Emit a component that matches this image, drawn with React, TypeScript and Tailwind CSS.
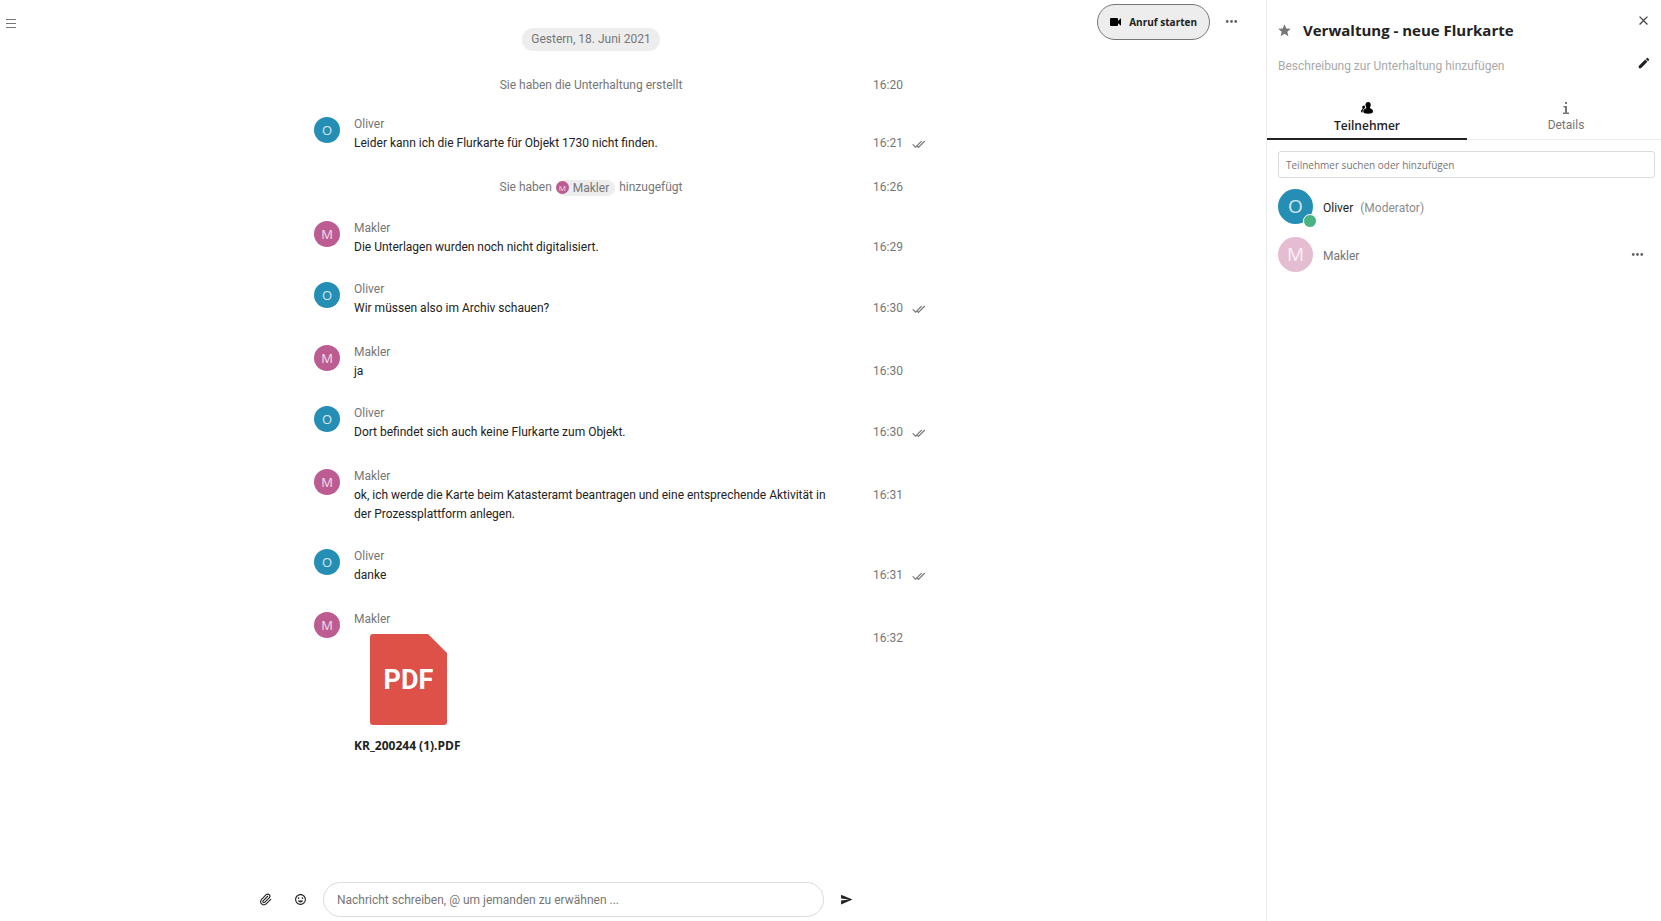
import type { ReactNode } from 'react'
import clsx from 'clsx'
import { Paperclip } from 'lucide-react'
import { MdClose, MdEdit, MdInsertEmoticon, MdMoreHoriz, MdSend, MdStar } from 'react-icons/md'

type User = 'Oliver' | 'Makler'

type ChatMessage = {
  author: User
  text?: string
  file?: string
  time: string
  read?: boolean
}

const AVATAR_COLORS: Record<User, string> = {
  Oliver: 'bg-[#248eb5]',
  Makler: 'bg-[#bc5c91]',
}

const MESSAGES: ChatMessage[] = [
  { author: 'Makler', text: 'Die Unterlagen wurden noch nicht digitalisiert.', time: '16:29' },
  { author: 'Oliver', text: 'Wir müssen also im Archiv schauen?', time: '16:30', read: true },
  { author: 'Makler', text: 'ja', time: '16:30' },
  { author: 'Oliver', text: 'Dort befindet sich auch keine Flurkarte zum Objekt.', time: '16:30', read: true },
  {
    author: 'Makler',
    text: 'ok, ich werde die Karte beim Katasteramt beantragen und eine entsprechende Aktivität in der Prozessplattform anlegen.',
    time: '16:31',
  },
  { author: 'Oliver', text: 'danke', time: '16:31', read: true },
  { author: 'Makler', file: 'KR_200244 (1).PDF', time: '16:32' },
]

function Avatar({ user, className }: { user: User; className?: string }) {
  return (
    <span
      className={clsx(
        "flex shrink-0 items-center justify-center rounded-full font-['Open_Sans',sans-serif] text-white/80",
        AVATAR_COLORS[user],
        className,
      )}
    >
      {user[0]}
    </span>
  )
}

function DoubleCheck() {
  return (
    <svg viewBox="0 0 14 9" className="h-[9px] w-[14px]" fill="none" stroke="#767676" strokeWidth="1.2" role="img" aria-label="Gelesen">
      <path d="M0.7 4.4 3.6 7.2 9.6 1.2M4.6 5.6 6.4 7.4 12.8 1" />
    </svg>
  )
}

function PdfIcon() {
  return (
    <svg viewBox="0 0 77 91" className="h-[91px] w-[77px]" role="img" aria-label="PDF">
      <path d="M3 0H58L77 19V88a3 3 0 0 1-3 3H3a3 3 0 0 1-3-3V3a3 3 0 0 1 3-3Z" fill="#dd5148" />
      <text x="38.5" y="55" textAnchor="middle" fill="#fff" fontFamily="Roboto" fontWeight="700" fontSize="27">
        PDF
      </text>
    </svg>
  )
}

function SystemMessage({ time, children }: { time: string; children: ReactNode }) {
  return (
    <li className="flex pb-5 text-[#767676]">
      <div className="ml-[121px] w-[474px] text-center">{children}</div>
      <time className="ml-[45px]">{time}</time>
    </li>
  )
}

function Message({ author, text, file, time, read }: ChatMessage) {
  return (
    <li className={clsx('flex', read ? 'pb-[25px]' : 'pb-[23px]')}>
      <Avatar user={author} className="mt-[2px] ml-[81px] size-[26px] text-[13px]" />
      <div className="ml-[14px] w-[474px]">
        <div className="text-[#767676]">{author}</div>
        {text && <p className="text-[#222]">{text}</p>}
        {file && (
          <a href="#datei" className="block font-['Open_Sans',sans-serif] font-bold text-[#222]">
            <span className="block px-4 pt-[5px] pb-[11px]">
              <PdfIcon />
            </span>
            {file}
          </a>
        )}
      </div>
      <time className="mt-[19px] ml-[45px] w-[39px] text-[#767676]">{time}</time>
      {read && (
        <span className="mt-[25px]">
          <DoubleCheck />
        </span>
      )}
    </li>
  )
}

function Chat() {
  return (
    <section className="flex min-h-screen min-w-0 flex-col">
      <div className="ml-[121px] flex w-[474px] justify-center pt-7">
        <span className="rounded-full bg-[#ededed] px-[9px] leading-[23px] text-[#767676]">Gestern, 18. Juni 2021</span>
      </div>
      <ul className="mt-[25px] grow">
        <SystemMessage time="16:20">Sie haben die Unterhaltung erstellt</SystemMessage>
        <Message author="Oliver" text="Leider kann ich die Flurkarte für Objekt 1730 nicht finden." time="16:21" read />
        <SystemMessage time="16:26">
          <span className="mb-[2px] flex items-center justify-center gap-1">
            Sie haben
            <span className="flex items-center gap-1 rounded-full bg-[#ededed] pr-[6px] leading-4">
              <Avatar user="Makler" className="size-[13px] text-[8px]" />
              Makler
            </span>
            hinzugefügt
          </span>
        </SystemMessage>
        {MESSAGES.map((message, i) => (
          <Message key={i} {...message} />
        ))}
      </ul>
      <form className="mb-1 ml-[14px] flex w-[617px] items-center text-[#222]">
        <button type="button" aria-label="Datei anhängen" className="flex size-9 items-center justify-center">
          <Paperclip size={13} />
        </button>
        <button type="button" aria-label="Emoji einfügen" className="flex h-9 w-[34px] items-center justify-center">
          <MdInsertEmoticon size={13} />
        </button>
        <input
          type="text"
          aria-label="Nachricht"
          placeholder="Nachricht schreiben, @ um jemanden zu erwähnen ..."
          className="mr-1 ml-[6px] h-[35px] min-w-0 grow rounded-full border border-[#dbdbdb] px-[13px] pt-px outline-none placeholder:text-[#767676]"
        />
        <button type="submit" aria-label="Senden" className="flex size-9 items-center justify-center">
          <MdSend size={13} />
        </button>
      </form>
    </section>
  )
}

function Sidebar() {
  return (
    <aside className="w-[395px] shrink-0 border-l border-[#ededed]">
      <header className="pl-[10px]">
        <div className="flex h-[52px] pr-[10px]">
          <MdStar size={15} className="mt-[23px] text-[#767676]" />
          <h1 className="mt-[18px] ml-[11px] grow font-['Open_Sans',sans-serif] text-[15px] leading-6 font-bold text-[#222]">
            Verwaltung - neue Flurkarte
          </h1>
          <button type="button" aria-label="Schließen" className="mt-3 h-4 text-[#444]">
            <MdClose size={15} />
          </button>
        </div>
        <div className="flex items-start justify-between pt-1 pr-[10px] text-[#a9a9a9]">
          <span className="ml-px leading-5">Beschreibung zur Unterhaltung hinzufügen</span>
          <button type="button" aria-label="Beschreibung bearbeiten" className="text-[#222]">
            <MdEdit size={14} />
          </button>
        </div>
      </header>

      <div role="tablist" className="mt-6 flex">
        <button
          type="button"
          role="tab"
          aria-selected="true"
          className="flex w-[200px] flex-col items-center border-b-2 border-[#222] pb-[3px] font-['Open_Sans',sans-serif] font-semibold text-[#222]"
        >
          <svg viewBox="0 0 16 16" className="my-[2px] size-3" fill="#000" aria-hidden="true">
            <path d="M9.5 0C7.3 0 6 1.6 6 3.8c0 1.400.600 2.600 1 3.200.200.800 0 1.200-.800 1.600C4.500 9.400 3 10.500 3 12.200 3 14.600 5.500 15.500 9.500 15.500s6.500-.900 6.500-3.300c0-1.700-1.500-2.800-3.200-3.600-.800-.400-1-.800-.800-1.600.400-.600 1-1.800 1-3.200C13 1.600 11.700 0 9.500 0Z" />
            <path d="M4 4.500C2.500 4.500 1.600 5.600 1.600 7c0 1 .400 1.800.700 2.200C1 10 0 11 0 12.200c0 1 .700 1.600 2 1.800C2 11 3 9.300 5.400 8 5.100 7 5 5.500 5.200 4.900Z" />
          </svg>
          Teilnehmer
        </button>
        <button
          type="button"
          role="tab"
          aria-selected="false"
          className="flex grow flex-col items-center border-b border-[#ededed] pb-1 pl-1 text-[#767676]"
        >
          <svg viewBox="0 0 12 12" className="my-[2px] size-3" fill="currentColor" aria-hidden="true">
            <path d="M5 0h2v2H5zM3.500 4H7v6.500h2V12H3v-1.500h2V5.500H3.500z" />
          </svg>
          Details
        </button>
      </div>

      <div className="pt-[11px] pr-[6px] pl-[11px]">
        <input
          type="search"
          aria-label="Teilnehmer suchen oder hinzufügen"
          placeholder="Teilnehmer suchen oder hinzufügen"
          className="block h-[27px] w-full rounded-[3px] border border-[#dbdbdb] px-[7px] font-['Open_Sans',sans-serif] text-[10px] outline-none placeholder:text-[#767676]"
        />
        <ul className="mt-[11px]">
          <li className="flex h-12 items-start">
            <span className="relative">
              <Avatar user="Oliver" className="size-[35px] text-[19px]" />
              <span className="absolute -right-[4px] -bottom-[4px] size-[14px] rounded-full border border-white bg-[#49b382]" />
            </span>
            <span className="ml-[10px] leading-[39px] text-[#222]">Oliver</span>
            <span className="ml-[7px] leading-[39px] text-[#8c8c8c]">(Moderator)</span>
          </li>
          <li className="flex h-12 items-start">
            <Avatar user="Makler" className="size-[35px] text-[19px] opacity-40" />
            <span className="ml-[10px] grow leading-[39px] text-[#767676]">Makler</span>
            <button type="button" aria-label="Teilnehmer-Aktionen" className="mt-[9px] mr-[9px] text-[#666]">
              <MdMoreHoriz size={17} />
            </button>
          </li>
        </ul>
      </div>
    </aside>
  )
}

export default function App() {
  return (
    <div className="flex min-h-screen bg-white font-['Roboto','Noto_Sans',sans-serif] text-[12px] leading-[19px]">
      <main className="grid min-w-0 grow grid-cols-[1fr_minmax(0,800px)_1fr]">
        <div>
          <button type="button" aria-label="Navigation öffnen" className="mt-[17px] ml-[6px] block">
            <svg viewBox="0 0 10 12" className="h-3 w-[10px]" stroke="#767676" aria-hidden="true">
              <path d="M0 2.500h10M0 6.500h10M0 10.500h10" />
            </svg>
          </button>
        </div>
        <Chat />
        <div className="flex items-start justify-end pt-1 pr-[26px]">
          <button
            type="button"
            className="flex h-9 items-center gap-2 rounded-full border border-[#767676] bg-[#ededed] px-3 font-['Open_Sans',sans-serif] text-[10px] font-bold whitespace-nowrap text-[#222]"
          >
            <svg viewBox="0 0 11 8" className="h-2 w-[11px]" fill="#000" aria-hidden="true">
              <path d="M1 0H7a1 1 0 0 1 1 1V2.800L11 0.300V7.700L8 5.200V7a1 1 0 0 1-1 1H1a1 1 0 0 1-1-1V1a1 1 0 0 1 1-1Z" />
            </svg>
            Anruf starten
          </button>
          <button type="button" aria-label="Unterhaltungseinstellungen" className="mt-[9px] ml-[13px] text-[#666]">
            <MdMoreHoriz size={17} />
          </button>
        </div>
      </main>
      <Sidebar />
    </div>
  )
}
